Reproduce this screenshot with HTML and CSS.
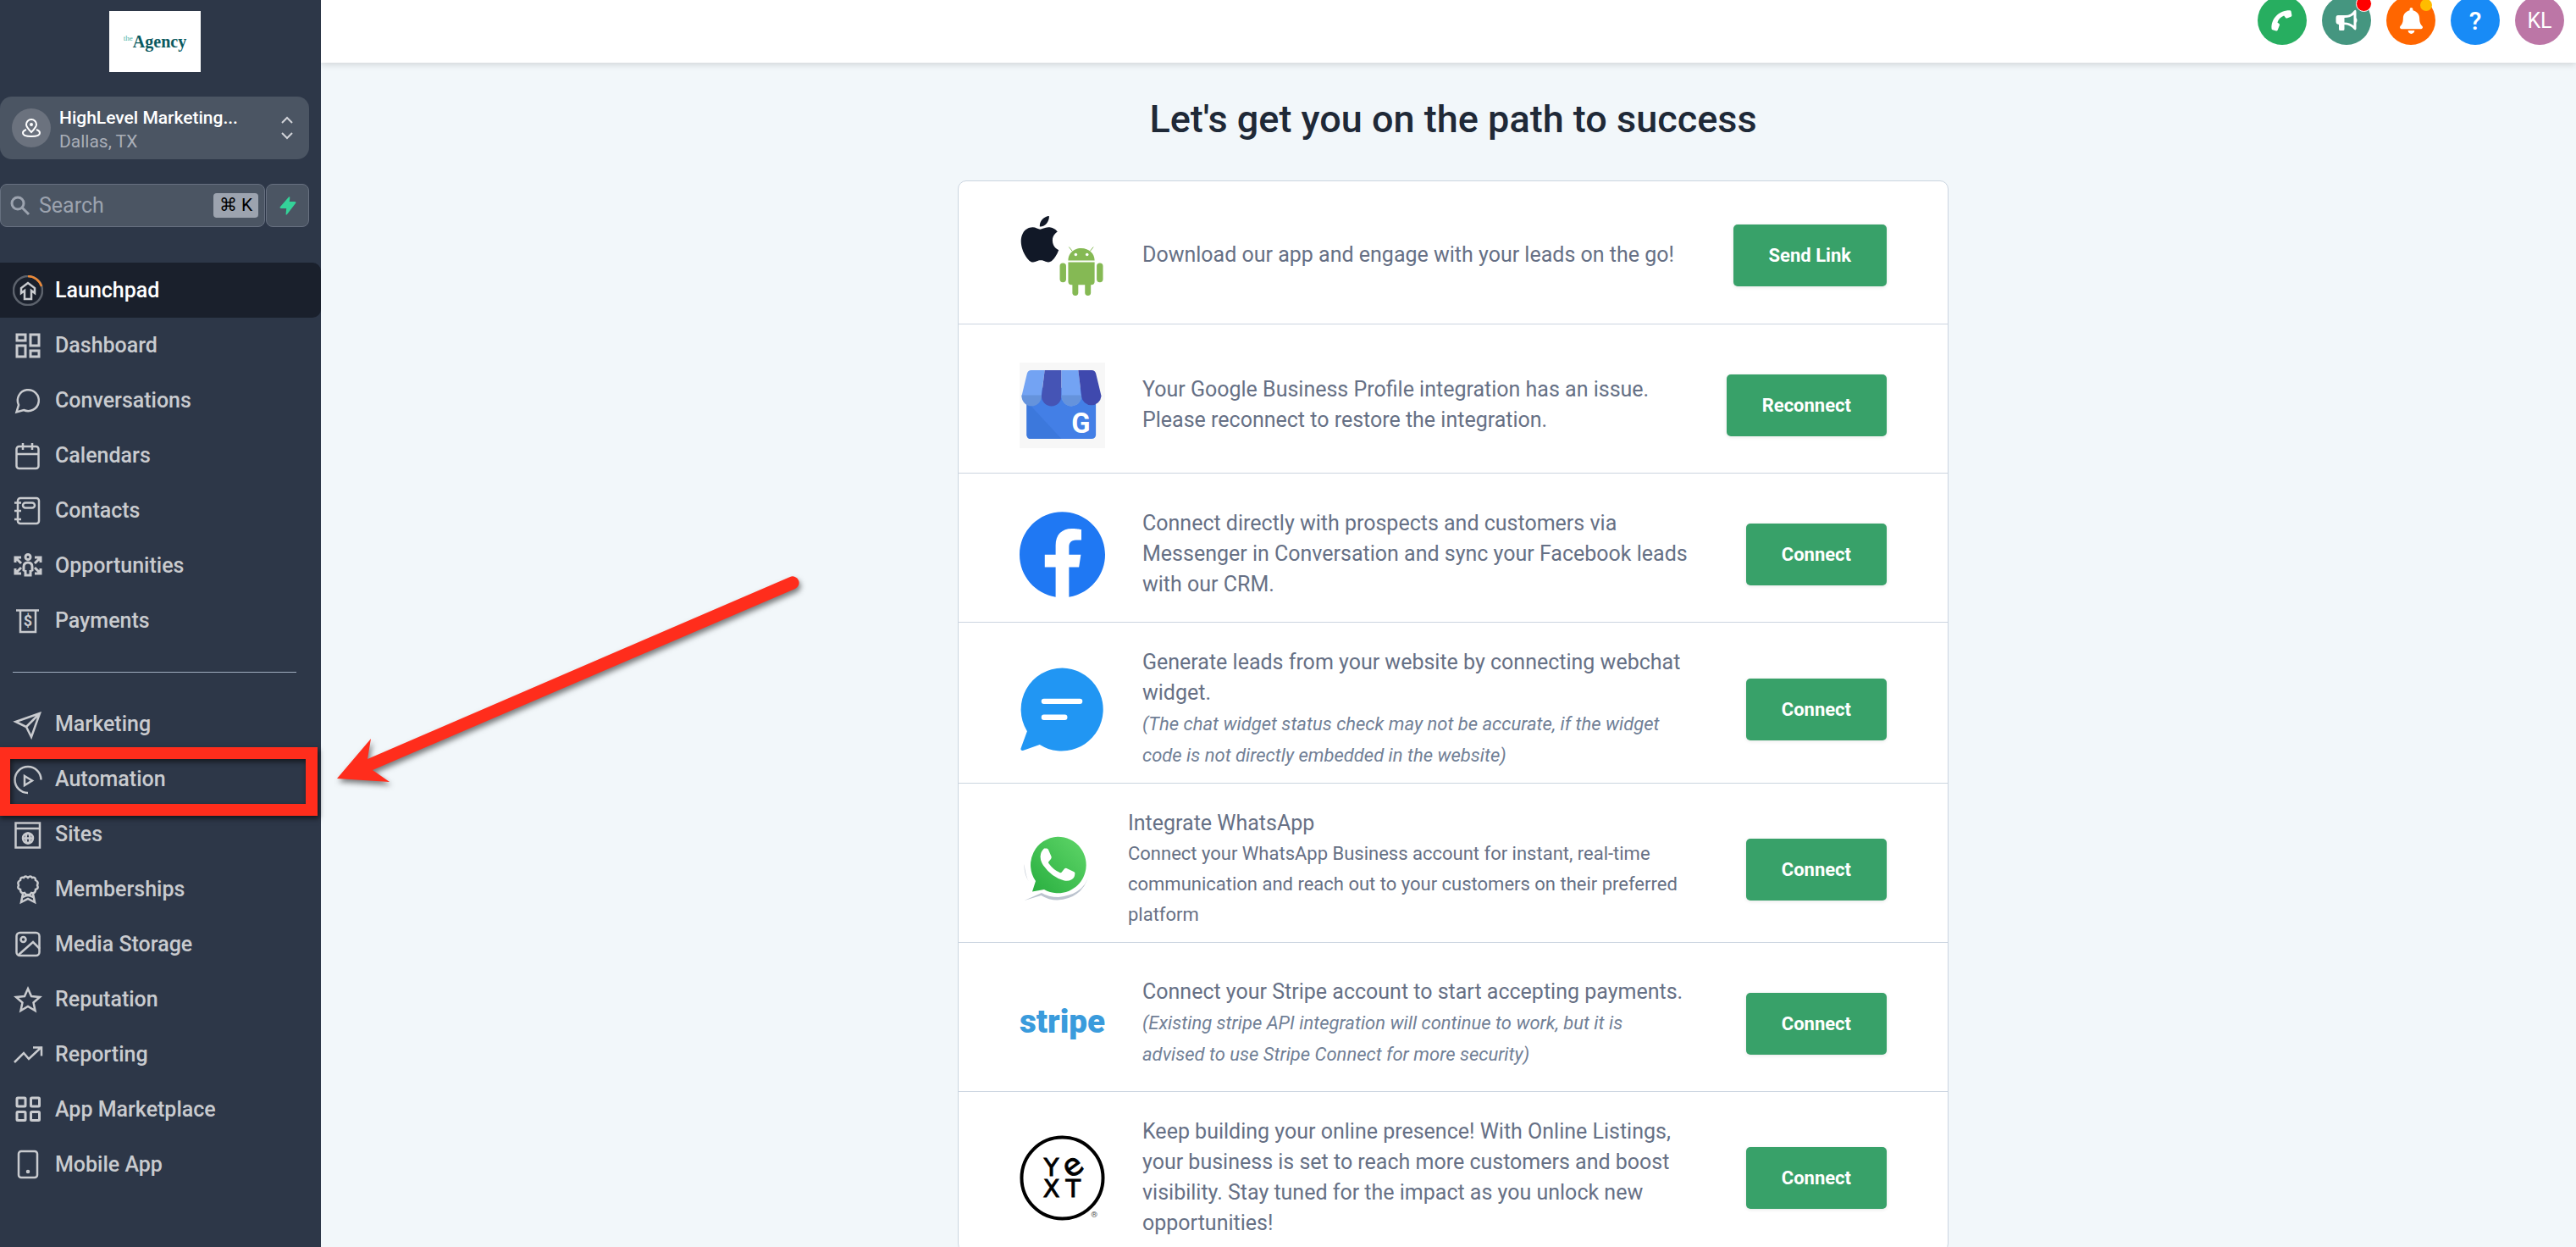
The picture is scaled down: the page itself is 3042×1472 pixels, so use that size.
FILE: index.html
```html
<!DOCTYPE html>
<html lang="en">
<head>
  <meta charset="UTF-8">
  <meta name="viewport" content="width=device-width, initial-scale=1.0">
  <title>Launchpad</title>
  <link rel="stylesheet" href="styles.css">
</head>
<body>

  <aside class="sidebar">
    <div class="logo"><span class="logo-the">the</span><span class="logo-name">Agency</span></div>

    <button class="location" type="button">
      <span class="location-icon">
        <svg width="24" height="24" viewBox="0 0 24 24" fill="none" stroke="#fff" stroke-width="2">
          <path d="M12 17C8 13 6 11 6 8a6 6 0 0 1 12 0c0 3-2 5-6 9z"/>
          <circle cx="12" cy="8" r="1"/>
          <path d="M6 14c-3 1-4 2-4 4 0 3 5 4 10 4s10-1 10-4c0-2-1-3-4-4"/>
        </svg>
      </span>
      <span class="location-text">
        <span class="location-name">HighLevel Marketing...</span>
        <span class="location-city">Dallas, TX</span>
      </span>
      <svg width="14" height="28" viewBox="0 0 14 28" fill="none" stroke="#d1d3d8" stroke-width="2">
        <path d="M1 8l6-6 6 6M1 20l6 6 6-6"/>
      </svg>
    </button>

    <div class="search">
      <div class="search-box">
        <svg width="24" height="24" viewBox="0 0 24 24" fill="none" stroke="#9ca3af" stroke-width="3">
          <circle cx="9" cy="9" r="7"/><path d="M14 14l8 8"/>
        </svg>
        <input type="text" placeholder="Search" aria-label="Search">
        <kbd>⌘ K</kbd>
      </div>
      <button class="quick" type="button" aria-label="Quick actions">
        <svg width="20" height="22" viewBox="0 0 20 22" fill="#34d399"><path d="M11 0.6q1.400-.8 1.300.8L11.800 6H18q2.200.2 1 2L9 21q-1.500 1.400-1.400-.6L8.200 14H2Q-.4 13.600 1 12z"/></svg>
      </button>
    </div>

    <nav class="nav">
      <ul>
        <li><a class="active" href="#">
          <svg class="icon" viewBox="0 0 36 36"><circle cx="18" cy="18" r="17" stroke="#5c626c"/><path d="M18 1a17 17 0 0 1 16 12" stroke="#ed8936"/><path d="M18 9l-8 6v6l4-3v10h8V18l4 3v-6z"/></svg>
          Launchpad</a></li>
        <li><a href="#">
          <svg class="icon bold" viewBox="0 0 36 36"><path d="M5 5h10v7H5zM21 5h10v13H21zM5 18h10v13H5zM21 24h10v7H21z"/></svg>
          Dashboard</a></li>
        <li><a href="#">
          <svg class="icon" viewBox="0 0 36 36"><path d="M13 29A12.500 12.500 0 1 0 7 23L4.500 31.500Z"/></svg>
          Conversations</a></li>
        <li><a href="#">
          <svg class="icon" viewBox="0 0 36 36"><rect x="4.500" y="7" width="26" height="26" rx="3"/><path d="M5 16h25M12 3v8M23 3v8"/></svg>
          Calendars</a></li>
        <li><a href="#">
          <svg class="icon" viewBox="0 0 36 36"><rect x="6" y="3" width="25" height="30" rx="3"/><rect x="12" y="8.500" width="14" height="6" rx="3"/><path d="M2 8.500h8M2 18h8M2 28h8"/></svg>
          Contacts</a></li>
        <li><a href="#">
          <svg class="icon bold" viewBox="0 0 36 36"><circle cx="18" cy="7.500" r="3"/><path d="M15 29v-5l-2-1v-4q0-5 5-5t5 5v4l-2 1v5zM3 14V8h7M3 8l7 7M33 14V8h-7M33 8l-7 7M3 21v6h7M3 27l7-7M33 21v6h-7M33 27l-7-7"/></svg>
          Opportunities</a></li>
        <li><a href="#">
          <svg class="icon" viewBox="0 0 36 36"><path d="M4 5.500h27M9 6v25h18V6"/><text x="18" y="24">$</text></svg>
          Payments</a></li>
      </ul>
      <hr>
      <ul>
        <li><a href="#">
          <svg class="icon" viewBox="0 0 36 36"><path d="M32 5L3.500 15 16 21l6 12zM16 21L32 5"/></svg>
          Marketing</a></li>
        <li class="marked"><a href="#">
          <svg class="icon" viewBox="0 0 36 36"><path d="M33.500 18.500A15.500 15.500 0 1 0 18 34M14 14l9 5.500-9 5.500z"/></svg>
          Automation</a>
          <span class="mark-box"></span>
          <svg class="mark-arrow" width="560" height="250" viewBox="0 0 560 250" aria-hidden="true">
            <path d="M0 242L40 195 36 219 535 4A7.500 7.500 0 0 1 541 18L42 232 62 246z" fill="#ff2d1c"/>
          </svg>
        </li>
        <li><a href="#">
          <svg class="icon" viewBox="0 0 36 36"><path d="M3.500 4.500h28.500v29H3.500zM3.500 11H32"/><circle cx="18" cy="22.500" r="6"/><ellipse cx="18" cy="22.500" rx="2.500" ry="6"/><path d="M12 22.500h12"/></svg>
          Sites</a></li>
        <li><a href="#">
          <svg class="icon" viewBox="0 0 36 36"><path d="M18 4q3-3 5 0 4-1 4 3 4 2 2 6 2 4-2 5 0 5-5 4-2 3-4 2-2 1-4-2-5 1-5-4-4-1-2-5-2-4 2-6 0-4 4-3 2-3 5 0zM12 23l-2 10 8-4 8 4-2-10M12 27q6-4 12 0"/></svg>
          Memberships</a></li>
        <li><a href="#">
          <svg class="icon" viewBox="0 0 36 36"><rect x="4.500" y="4" width="27" height="27" rx="4"/><circle cx="12.500" cy="12" r="3"/><path d="M7 30l17-15 8 8"/></svg>
          Media Storage</a></li>
        <li><a href="#">
          <svg class="icon" viewBox="0 0 36 36"><path d="M18 5l4 9 10 1-7.500 6.500 2 9.500-8.500-5-8.500 5 2-9.500L4 15l10-1z"/></svg>
          Reputation</a></li>
        <li><a href="#">
          <svg class="icon" viewBox="0 0 36 36"><path d="M2 27l11-11 6 7L34 9M24 9.500h10v10"/></svg>
          Reporting</a></li>
        <li><a href="#">
          <svg class="icon bold" viewBox="0 0 36 36"><rect x="5" y="4" width="10" height="10" rx="1"/><rect x="21.500" y="4" width="10" height="10" rx="1"/><rect x="5" y="20.500" width="10" height="10" rx="1"/><rect x="21.500" y="20.500" width="10" height="10" rx="1"/></svg>
          App Marketplace</a></li>
        <li><a href="#">
          <svg class="icon" viewBox="0 0 36 36"><rect x="7" y="2" width="22" height="31" rx="3"/><circle cx="18" cy="26" r="1"/></svg>
          Mobile App</a></li>
      </ul>
    </nav>
  </aside>

  <div class="page">
    <header class="topbar">
      <button class="round green" type="button" aria-label="Phone">
        <svg width="58" height="58" viewBox="0 0 58 58" fill="#fff"><path d="M16.500 38.500C16 27 25 17 38 17.200q1.300 0 1.600 1.300l.8 4.500q.2 1.300-1 1.800l-4.600 1.600q-1 .3-1.700-.5l-2-2.500Q25 26 23.400 31.500l2 1.600q.9.700.5 1.700l-2.200 5.600q-.5 1.300-1.800 1l-4.200-1.200q-1.200-.3-1.200-1.700z"/></svg>
      </button>
      <button class="round teal" type="button" aria-label="News">
        <svg width="58" height="58" viewBox="0 0 58 58" fill="#fff"><path fill-rule="evenodd" d="M19 23h9q6 0 10-5.500 2.500-1.800 2.500 1V26q2 3 0 6v7q-.5 2.500-2.500.8Q34 34.500 26.500 34v5.500q0 1.500-1.500 1.500h-3.500q-1.500 0-1.500-1.500V34q-3.500-.5-3.500-3.500V26q0-3 2.500-3zM26.500 26v5.500q6.500 0 11 3.800V22.500Q33 26 26.500 26z"/></svg>
        <span class="badge red"></span>
      </button>
      <button class="round orange" type="button" aria-label="Notifications">
        <svg width="27" height="31" viewBox="0 0 448 512" fill="#fff"><path d="M224 512c35.320 0 63.970-28.650 63.970-64H160.030c0 35.350 28.650 64 63.970 64zm215.390-149.710c-19.320-20.760-55.470-51.990-55.470-154.290 0-77.700-54.480-139.900-127.940-155.160V32c0-17.670-14.320-32-31.980-32s-31.980 14.330-31.980 32v20.840C118.560 68.100 64.080 130.300 64.080 208c0 102.300-36.150 133.530-55.470 154.290-6 6.450-8.660 14.160-8.610 21.710.11 16.400 12.980 32 32.100 32h383.800c19.120 0 32-15.600 32.100-32 .05-7.550-2.610-15.270-8.610-21.710z"/></svg>
        <span class="badge yellow"></span>
      </button>
      <button class="round blue help" type="button" aria-label="Help">?</button>
      <button class="round pink" type="button">KL</button>
    </header>

    <main class="content">
      <h1>Let's get you on the path to success</h1>

      <div class="card">
        <section class="row">
          <svg class="brand" viewBox="0 0 102 102">
            <path transform="translate(-3.400 4) scale(2.300)" fill="#111827" d="M12.152 6.896c-.948 0-2.415-1.078-3.960-1.040-2.040.027-3.910 1.183-4.961 3.014-2.117 3.675-.546 9.103 1.519 12.090 1.013 1.454 2.208 3.090 3.792 3.039 1.520-.065 2.090-.987 3.935-.987 1.831 0 2.350.987 3.960.948 1.637-.026 2.676-1.480 3.676-2.948 1.156-1.688 1.636-3.325 1.662-3.415-.039-.013-3.182-1.221-3.220-4.857-.026-3.040 2.480-4.494 2.597-4.559-1.429-2.090-3.623-2.324-4.390-2.376-2-.156-3.675 1.090-4.610 1.090zM15.530 3.830c.843-1.012 1.400-2.427 1.245-3.830-1.207.052-2.662.805-3.532 1.818-.78.896-1.454 2.338-1.273 3.714 1.338.104 2.715-.688 3.559-1.701"/>
            <g fill="#85b954">
              <path d="M58 57c0-8 6-14.500 15.500-14.500S89.500 49 89.500 57zM58 59h31.500v23q0 4-4 4H62q-4 0-4-4z"/>
              <rect x="48" y="60" width="7.500" height="23" rx="3.700"/><rect x="92" y="60" width="7.500" height="23" rx="3.700"/>
              <rect x="63" y="80" width="7" height="19" rx="3.500"/><rect x="78" y="80" width="7" height="19" rx="3.500"/>
              <path d="M63 46l-4-5M84 46l4-5" stroke="#85b954" stroke-width="1"/>
            </g>
            <circle cx="67" cy="50" r="1.800" fill="#fff"/><circle cx="80.500" cy="50" r="1.800" fill="#fff"/>
          </svg>
          <div class="text"><p>Download our app and engage with your leads on the go!</p></div>
          <button class="btn" type="button">Send Link</button>
        </section>

        <section class="row">
          <svg class="brand" viewBox="0 0 102 102">
            <rect width="102" height="102" fill="#f7f7f7"/>
            <rect x="8.500" y="30" width="82.500" height="61" rx="5" fill="#437fe6"/>
            <path d="M12 50l38 41H14q-5.500 0-5.500-5V48z" fill="#3c78dc"/>
            <path d="M14 9h16l-4 31a11.800 11.800 0 0 1-23.500 0L9 13q1-4 5-4z" fill="#73a3f3"/>
            <path d="M30 9h20v31a11.900 11.900 0 0 1-23.800 0z" fill="#4554b5"/>
            <path d="M50 9h20l3.800 31A11.900 11.900 0 0 1 50 40z" fill="#73a3f3"/>
            <path d="M70 9h16q4 0 5 4l6.500 27a11.900 11.900 0 0 1-23.700 0z" fill="#3f49ae"/>
            <path d="M2.500 39h23.700v1a11.800 11.800 0 0 1-23.700 0zM50 39h23.800v1A11.900 11.900 0 0 1 50 40z" fill="#6593dc"/>
            <text class="g-letter" x="73" y="84">G</text>
          </svg>
          <div class="text"><p>Your Google Business Profile integration has an issue. Please reconnect to restore the integration.</p></div>
          <button class="btn" type="button">Reconnect</button>
        </section>

        <section class="row">
          <svg class="brand" viewBox="0 0 24 24"><path fill="#1f78f3" d="M24 12.073c0-6.627-5.373-12-12-12s-12 5.373-12 12c0 5.990 4.388 10.954 10.125 11.854v-8.385H7.078v-3.470h3.047V9.430c0-3.007 1.792-4.669 4.533-4.669 1.312 0 2.686.235 2.686.235v2.953H15.830c-1.491 0-1.956.925-1.956 1.874v2.250h3.328l-.532 3.470h-2.796v8.385C19.612 23.027 24 18.062 24 12.073z"/></svg>
          <div class="text"><p>Connect directly with prospects and customers via Messenger in Conversation and sync your Facebook leads with our CRM.</p></div>
          <button class="btn" type="button">Connect</button>
        </section>

        <section class="row">
          <svg class="brand" viewBox="0 0 102 102">
            <path d="M51 1.500A49.500 49.500 0 1 1 24 93L4 100q-3 .5-2.500-2.500L9 77A49.500 49.500 0 0 1 51 1.500z" fill="#2196f3"/>
            <rect x="26" y="38" width="49" height="6.500" rx="3" fill="#fff"/><rect x="26" y="57" width="31" height="6.500" rx="3" fill="#fff"/>
          </svg>
          <div class="text">
            <p>Generate leads from your website by connecting webchat widget.</p>
            <p class="note">(The chat widget status check may not be accurate, if the widget code is not directly embedded in the website)</p>
          </div>
          <button class="btn" type="button">Connect</button>
        </section>

        <section class="row">
          <svg class="brand small" viewBox="0 0 84 84">
            <defs><linearGradient id="wa" x1="1" y1="0" x2="0" y2="1"><stop offset="0" stop-color="#60d669"/><stop offset="1" stop-color="#28ae3f"/></linearGradient></defs>
            <path d="M5.500 79l20-6q9 5.500 19 5.500Q75 77 82.500 47 77 72 46 75q-12 0-20-5zM5.500 36Q7 50 11 57 5 47 5.500 36z" fill="#bcc4cf"/>
            <path d="M45 3.700a33.300 33.300 0 1 1-16 62.300l-14 2.500 4-12.500A33.300 33.300 0 0 1 45 3.700z" fill="url(#wa)"/>
            <path d="M29 17.500h3q1.500 0 2 1.500l3.500 8q.5 1.500-.5 3l-2.500 3q-1 1 0 2.300Q40 43 47.500 46q1.500.6 2.300-.4l3.200-4q1-1.400 2.600-.7l8.400 4q1.500.8 1.400 2.100-.2 5.500-4.400 7.500-4 2.200-9 .7Q38 51.500 28 37.500 24.500 32 24.600 27q.4-6 4.400-9.500z" fill="#fff"/>
          </svg>
          <div class="text">
            <p>Integrate WhatsApp</p>
            <p class="detail">Connect your WhatsApp Business account for instant, real-time communication and reach out to your customers on their preferred platform</p>
          </div>
          <button class="btn" type="button">Connect</button>
        </section>

        <section class="row">
          <svg class="brand" viewBox="0 0 102 102"><text class="stripe-word" x="51" y="62">stripe</text></svg>
          <div class="text">
            <p>Connect your Stripe account to start accepting payments.</p>
            <p class="note">(Existing stripe API integration will continue to work, but it is advised to use Stripe Connect for more security)</p>
          </div>
          <button class="btn" type="button">Connect</button>
        </section>

        <section class="row">
          <svg class="brand" viewBox="0 0 102 102">
            <circle cx="51" cy="51" r="48.500" fill="none" stroke="#000" stroke-width="4"/>
            <g class="yext-word">
              <text x="38" y="48">Y</text><text class="yext-e" x="64" y="48" transform="rotate(-36 64 38)">e</text>
              <text x="38" y="74">X</text><text x="64" y="74">T</text>
            </g>
            <text class="yext-reg" x="89" y="98">®</text>
          </svg>
          <div class="text"><p>Keep building your online presence! With Online Listings, your business is set to reach more customers and boost visibility. Stay tuned for the impact as you unlock new opportunities!</p></div>
          <button class="btn" type="button">Connect</button>
        </section>
      </div>
    </main>
  </div>

</body>
</html>
```
FILE: styles.css
```css
* {
  box-sizing: border-box;
}
body {
  margin: 0;
  height: 100vh;
  overflow: hidden;
  display: grid;
  grid-template-columns: 379px 1fr;
  font-family: Roboto, 'Liberation Sans', sans-serif;
  background-color: #f2f7fa;
  color: #667085;
}
button, input, kbd {
  font-family: inherit;
}
p, h1, ul {
  margin: 0;
  padding: 0;
}

/* sidebar */
.sidebar {
  position: relative;
  z-index: 2;
  background-color: #2d3748;
  padding-top: 13px;
}
.logo {
  width: 108px;
  height: 72px;
  margin-left: 129px;
  background-color: #fff;
  display: flex;
  justify-content: center;
  align-items: center;
  font-family: 'Liberation Serif', serif;
}
.logo-the {
  font-size: 9px;
  color: #4bb3a7;
  padding-bottom: 8px;
}
.logo-name {
  font-size: 20px;
  font-weight: bold;
  color: #0b5a60;
}
.location {
  display: flex;
  align-items: center;
  width: 365px;
  height: 74px;
  margin-top: 29px;
  padding: 0 19px 0 14px;
  border: none;
  border-radius: 14px;
  background-color: #4b5563;
  text-align: left;
}
.location-icon {
  display: flex;
  justify-content: center;
  align-items: center;
  width: 46px;
  height: 46px;
  border-radius: 50%;
  background-color: #6b727e;
}
.location-text {
  flex: 1;
  padding: 4px 0 0 10px;
  font-size: 21px;
  line-height: 28px;
}
.location-name {
  display: block;
  font-weight: 500;
  color: #fff;
}
.location-city {
  display: block;
  color: #a9aeb7;
}
.search {
  display: flex;
  gap: 1px;
  width: 365px;
  height: 51px;
  margin-top: 29px;
}
.search-box {
  flex: 1;
  min-width: 0;
  display: flex;
  align-items: center;
  gap: 10px;
  padding: 0 7px 0 11px;
  border: 1px solid #677080;
  border-radius: 8px;
  background-color: #4b5563;
}
.search-box svg {
  flex: none;
}
.search-box input {
  flex: 1;
  min-width: 0;
  padding: 0;
  border: none;
  background: none;
  font-size: 25px;
  color: #fff;
}
.search-box input::placeholder {
  color: #9ca3af;
}
kbd {
  flex: none;
  width: 53px;
  border-radius: 4px;
  background-color: #9ca3af;
  color: #000;
  font-size: 21px;
  line-height: 29px;
  text-align: center;
  white-space: nowrap;
}
.quick {
  flex: none;
  display: flex;
  justify-content: center;
  align-items: center;
  width: 51px;
  padding: 0;
  border: 1px solid #677080;
  border-radius: 8px;
  background-color: #4b5563;
}

/* navigation */
.nav {
  margin-top: 42px;
}
.nav ul {
  list-style: none;
}
.nav a {
  display: flex;
  align-items: center;
  gap: 14px;
  height: 65px;
  padding-left: 15px;
  font-size: 25px;
  font-weight: 500;
  color: #c9cbcf;
  text-decoration: none;
}
.nav a.active {
  background-color: #1a202c;
  border-radius: 0 10px 10px 0;
  color: #fff;
}
.nav hr {
  height: 1px;
  margin: 28px 29px 28px 15px;
  border: none;
  background-color: #a0aec0;
}
.icon {
  width: 36px;
  height: 36px;
  fill: none;
  stroke: #c9cbcf;
  stroke-width: 2.5;
}
.icon.bold {
  stroke-width: 3;
}
.icon text {
  font-size: 18px;
  font-weight: 700;
  text-anchor: middle;
  fill: #c9cbcf;
  stroke: none;
}
.marked {
  position: relative;
}
.mark-box {
  position: absolute;
  top: -5px;
  left: -2px;
  width: 377px;
  height: 81px;
  border: 14px solid #ff2d1c;
  box-shadow: 2px 3px 6px rgba(0, 0, 0, 0.6), inset 2px 3px 6px rgba(0, 0, 0, 0.6);
}
.mark-arrow {
  position: absolute;
  left: 398px;
  bottom: 25px;
  overflow: visible;
  filter: drop-shadow(2px 4px 3px rgba(0, 0, 0, 0.5));
}

/* top bar */
.page {
  min-width: 0;
}
.topbar {
  display: flex;
  justify-content: flex-end;
  align-items: flex-end;
  gap: 18px;
  height: 74px;
  padding: 0 14px 21px;
  background-color: #fff;
  box-shadow: 0 2px 8px rgba(0, 0, 0, 0.15);
}
.round {
  position: relative;
  display: flex;
  justify-content: center;
  align-items: center;
  width: 58px;
  height: 58px;
  padding: 0;
  border: none;
  border-radius: 50%;
  color: #fff;
  font-size: 25px;
}
.help {
  font-size: 30px;
  font-weight: 500;
}
.green {
  background-color: #27ae60;
}
.teal {
  background-color: #459680;
}
.orange {
  background-color: #ff6600;
}
.blue {
  background-color: #188bf6;
}
.pink {
  background-color: #bc76a6;
}
.badge {
  position: absolute;
  border-radius: 50%;
}
.badge.red {
  top: 0;
  right: -1px;
  width: 19px;
  height: 19px;
  border: 1px solid #fff;
  background-color: #ff0000;
}
.badge.yellow {
  top: 4px;
  right: 4px;
  width: 14px;
  height: 14px;
  background-color: #ffbc00;
}

/* launchpad card */
.content {
  padding: 36px 0 0 11px;
}
h1 {
  font-size: 45px;
  font-weight: 500;
  line-height: 62px;
  text-align: center;
  color: #1f2937;
}
.card {
  max-width: 1170px;
  margin: 41px auto 0;
  border: 1px solid #cbd5e0;
  border-radius: 10px;
  background-color: #fff;
}
.row {
  display: flex;
  align-items: center;
  min-height: 176px;
  padding: 29px 72px 14px;
  border-bottom: 1px solid #cbd5e0;
}
.row:first-child {
  min-height: 169px;
  padding-top: 20px;
}
.brand {
  flex: none;
  width: 101px;
  height: 101px;
  margin-right: 44px;
}
.brand.small {
  width: 84px;
  height: 84px;
}
.text {
  width: 651px;
  font-size: 25px;
  line-height: 36px;
}
.note {
  padding-right: 15px;
  font-size: 22px;
  line-height: 37px;
  font-style: italic;
  color: #718096;
}
.detail {
  font-size: 22px;
}
.btn {
  height: 73px;
  margin-left: auto;
  padding: 0 42px;
  border: none;
  border-radius: 5px;
  background-color: #38a169;
  box-shadow: 0 1px 4px rgba(0, 0, 0, 0.1);
  color: #fff;
  font-size: 22px;
  font-weight: 700;
}
.g-letter {
  font-size: 33px;
  font-weight: 700;
  text-anchor: middle;
  fill: #fff;
}
.stripe-word {
  font-size: 39px;
  font-weight: 900;
  text-anchor: middle;
  fill: #3a9bdc;
}
.yext-word {
  font-family: 'DejaVu Sans', sans-serif;
  font-size: 29px;
  text-anchor: middle;
  fill: #000;
  stroke: #000;
}
.yext-e {
  font-size: 36px;
}
.yext-reg {
  font-size: 10px;
  text-anchor: middle;
  fill: #555;
}
```
